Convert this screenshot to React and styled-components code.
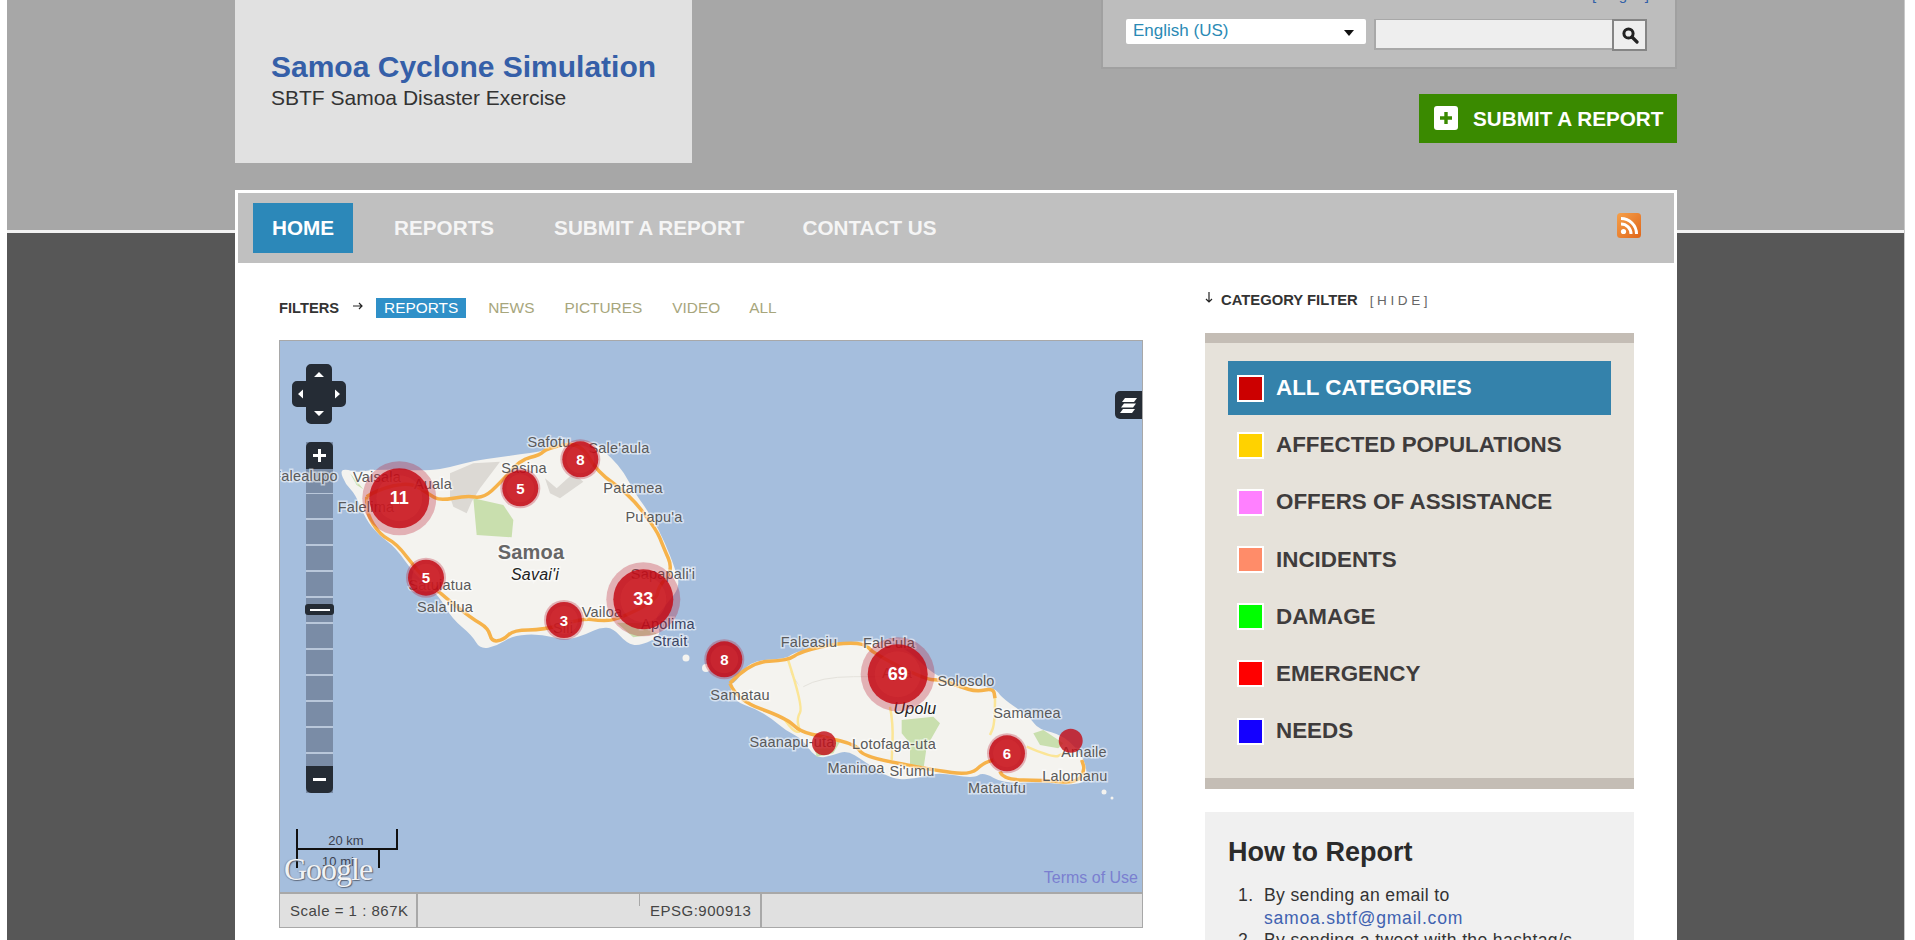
import React from 'react';
import styled, { createGlobalStyle } from 'styled-components';

const GlobalStyle = createGlobalStyle`
    html, body {
        margin: 0;
        padding: 0;
        background: #fff;
        overflow: hidden;
    }
    * {
        box-sizing: border-box;
    }
    body {
        font-family: "Liberation Sans", Arial, sans-serif;
    }
`;

const Frame = styled.div`
    width: 1898px;
    height: 940px;
    margin-left: 7px;
    background: #575757;
    border-right: 1px solid #c8c8c8;
    overflow: hidden;
`;

const Band = styled.div`
    height: 233px;
    background: #a7a7a7;
    border-bottom: 3px solid #f2f2f2;
`;

const Wrap = styled.div`
    width: 1442px;
    margin-left: 228px;
`;

const HeaderRow = styled(Wrap)`
    display: flex;
    justify-content: space-between;
    align-items: flex-start;
`;

const Logo = styled.div`
    width: 457px;
    height: 163px;
    padding: 49px 0 0 36px;
    background: #e1e1e1;
`;

const Title = styled.h1`
    margin: 0;
    font-size: 30px;
    line-height: 36px;
    font-weight: bold;
    color: #355fa8;
`;

const Tagline = styled.p`
    margin: 1px 0 0;
    font-size: 21px;
    line-height: 24px;
    color: #333;
`;

const HeaderRight = styled.div`
    width: 576px;
    display: flex;
    flex-direction: column;
    align-items: flex-end;
`;

const SearchBox = styled.div`
    position: relative;
    width: 576px;
    height: 69px;
    padding: 19px 0 0 23px;
    display: flex;
    align-items: flex-start;
    background: #bdbdbd;
    border: 2px solid #a0a0a0;
    border-top: 0;
`;

const LoginLine = styled.div`
    position: absolute;
    top: -13px;
    right: 24px;
    font-size: 15px;
    line-height: 16px;
    color: #e6dfc8;

    a {
        color: #3160a8;
        letter-spacing: 2px;
    }
`;

const LangSelect = styled.div`
    width: 240px;
    height: 25px;
    margin-right: 8px;
    padding: 0 8px 0 7px;
    display: flex;
    align-items: center;
    justify-content: space-between;
    background: #fff;
    border-radius: 2px;
    font-size: 17px;
    color: #2a8ab5;

    span {
        margin-top: -1px;
    }

    i {
        width: 0;
        height: 0;
        margin: 2px 4px 0 0;
        border-left: 5px solid transparent;
        border-right: 5px solid transparent;
        border-top: 6px solid #111;
    }
`;

const SearchInput = styled.div`
    width: 238px;
    height: 31px;
    background: #eee;
    border: 2px solid #a8a8a8;
    border-top-width: 1px;
    border-right: 0;
`;

const SearchButton = styled.div`
    width: 35px;
    height: 32px;
    display: flex;
    align-items: center;
    justify-content: center;
    background: #eee;
    border: 2px solid #858585;
`;

const SubmitButton = styled.a`
    width: 258px;
    height: 49px;
    margin-top: 25px;
    padding-left: 15px;
    display: flex;
    align-items: center;
    background: #3a8a00;
    color: #fff;
    font-size: 20.7px;
    font-weight: bold;
    white-space: nowrap;
`;

const PlusIcon = styled.span`
    width: 24px;
    height: 24px;
    margin: -2px 15px 0 0;
    display: flex;
    align-items: center;
    justify-content: center;
    background: #fff;
    border-radius: 3px;
`;

const Main = styled(Wrap)`
    margin-top: -43px;
    height: 800px;
    background: #fff;
    border: solid #fff;
    border-width: 3px 3px 0;
`;

const Nav = styled.nav`
    height: 70px;
    padding: 10px 33px 0 15px;
    display: flex;
    align-items: flex-start;
    background: #c0c0c0;
`;

const NavLink = styled.a`
    height: 50px;
    margin-right: ${p => p.$gap}px;
    padding: 0 ${p => (p.$active ? 19 : 0)}px;
    display: flex;
    align-items: center;
    background: ${p => (p.$active ? '#2c88b9' : 'transparent')};
    color: ${p => (p.$active ? '#fff' : '#f5f5f5')};
    font-size: 20.7px;
    font-weight: bold;
    white-space: nowrap;
`;

const RssLink = styled.a`
    margin: 10px 0 0 auto;
    display: block;
    height: 25px;
`;

const Content = styled.div`
    display: flex;
    align-items: flex-start;
`;

const LeftColumn = styled.div`
    width: 967px;
    padding: 35px 0 0 41px;
`;

const Filters = styled.div`
    height: 20px;
    margin-bottom: 22px;
    display: flex;
    align-items: center;
`;

const FilterLabel = styled.span`
    margin-right: 13px;
    font-size: 14.7px;
    font-weight: bold;
    color: #333;
`;

const SmallArrow = styled.svg`
    display: block;
    flex: none;
    margin-top: -5px;
`;

const FilterTab = styled.a`
    height: 20px;
    margin-left: ${p => p.$gap}px;
    padding: 0 ${p => (p.$active ? 8 : 0)}px;
    display: flex;
    align-items: center;
    background: ${p => (p.$active ? '#2f90c8' : 'transparent')};
    color: ${p => (p.$active ? '#fff' : '#a7a67c')};
    font-size: 15.4px;
`;

const MapBox = styled.div`
    width: 864px;
    border: 1px solid #a8a8a8;
`;

const MapCanvas = styled.div`
    position: relative;
    width: 862px;
    height: 551px;
    background: #a5bedd;
    overflow: hidden;
`;

/* sits above the zoom bar: the place names run over it in the reference */
const MapDrawing = styled.svg`
    position: relative;
    display: block;
`;

const PlaceLabel = styled.text`
    font-family: "Liberation Sans", Arial, sans-serif;
    font-size: ${p => p.$size || 14.5}px;
    font-weight: ${p => (p.$bold ? 'bold' : 'normal')};
    font-style: ${p => (p.$italic ? 'italic' : 'normal')};
    fill: ${p => p.$color || '#5a5a5a'};
    text-anchor: middle;
    dominant-baseline: central;
    letter-spacing: 0.2px;
    paint-order: stroke;
    stroke: rgba(255, 255, 255, 0.55);
    stroke-width: 3px;
`;

const ClusterCount = styled.text`
    font-family: "Liberation Sans", Arial, sans-serif;
    font-size: ${p => p.$size}px;
    font-weight: bold;
    fill: #fff;
    text-anchor: middle;
    dominant-baseline: central;
`;

const ScaleText = styled.text`
    font-family: "Liberation Sans", Arial, sans-serif;
    font-size: 13px;
    fill: #3c4250;
    text-anchor: middle;
    dominant-baseline: central;
`;

const PanControl = styled.svg`
    position: absolute;
    left: 12px;
    top: 23px;
`;

const ZoomBar = styled.div`
    position: absolute;
    left: 26px;
    top: 101px;
    width: 27px;
    height: 351px;
    background: repeating-linear-gradient(
        to bottom,
        #7a8ca6 0,
        #7a8ca6 24.5px,
        #b9c7da 24.5px,
        #b9c7da 26px
    );
`;

const ZoomCap = styled.div`
    position: absolute;
    left: 0;
    ${p => (p.$bottom ? 'bottom: 0' : 'top: 0')};
    width: 27px;
    height: 27px;
    display: flex;
    align-items: center;
    justify-content: center;
    background: #252c35;
    border-radius: ${p => (p.$bottom ? '0 0 5px 5px' : '5px 5px 0 0')};
`;

const ZoomHandle = styled.div`
    position: absolute;
    left: -1px;
    top: 162px;
    width: 29px;
    height: 11px;
    display: flex;
    align-items: center;
    justify-content: center;
    background: #252c35;
    border-radius: 3px;

    &::after {
        content: '';
        width: 20px;
        height: 2px;
        background: #fff;
    }
`;

const LayerSwitch = styled.div`
    position: absolute;
    right: 0;
    top: 50px;
    width: 27px;
    height: 28px;
    display: flex;
    align-items: center;
    justify-content: center;
    background: #252c35;
    border-radius: 5px 0 0 5px;
`;

const GoogleMark = styled.div`
    position: absolute;
    left: 4px;
    bottom: 6px;
    font-family: "Liberation Serif", serif;
    font-size: 32px;
    line-height: 34px;
    letter-spacing: -1px;
    color: rgba(255, 255, 255, 0.92);
    text-shadow: 1px 1px 1px #5c6678, -1px 0 1px #8a94a8;
`;

const TermsLink = styled.a`
    position: absolute;
    right: 4px;
    bottom: 5px;
    font-size: 16px;
    line-height: 18px;
    color: #7a7fd0;
`;

const StatusBar = styled.div`
    height: 35px;
    display: flex;
    background: #e0e0e0;
    border-top: 2px solid #a8a8a8;
    font-size: 15px;
    letter-spacing: 0.5px;
    color: #444;
`;

const StatusCell = styled.div`
    position: relative;
    width: ${p => p.$width}px;
    padding-left: ${p => p.$pad}px;
    display: flex;
    align-items: center;
    white-space: nowrap;
    border-right: ${p => (p.$divider ? '2px solid #a8a8a8' : '0')};
`;

const StatusNotch = styled.span`
    position: absolute;
    right: 0;
    top: 0;
    width: 1px;
    height: 12px;
    background: #a8a8a8;
`;

const RightColumn = styled.div`
    width: 429px;
    padding-top: 28px;
`;

const CategoryHead = styled.div`
    height: 18px;
    margin-bottom: 24px;
    display: flex;
    align-items: center;
`;

const CategoryTitle = styled.span`
    margin: 0 12px 0 6px;
    font-size: 14.8px;
    font-weight: bold;
    color: #333;
`;

const HideLink = styled.a`
    font-size: 13.5px;
    letter-spacing: 3.6px;
    color: #666;
`;

const CategoryPanel = styled.div`
    height: 456px;
    padding: 18px 23px 0;
    background: #e6e2da;
    border: solid #c4bdb5;
    border-width: 10px 0 11px;
`;

const CategoryRow = styled.a`
    height: 54px;
    margin-bottom: 3.2px;
    padding-left: 9px;
    display: flex;
    align-items: center;
    background: ${p => (p.$active ? '#3482ab' : 'transparent')};
    color: ${p => (p.$active ? '#fff' : '#3f3c3c')};
    font-size: 22.4px;
    font-weight: bold;
    white-space: nowrap;
`;

const Swatch = styled.span`
    width: 27px;
    height: 27px;
    margin-right: 12px;
    flex: none;
    background: ${p => p.$color};
    border: 2px solid #fff;
`;

const ReportBox = styled.div`
    margin-top: 23px;
    height: 200px;
    padding: 23px;
    background: #f0f0f0;
`;

const ReportTitle = styled.h2`
    margin: 0 0 15px;
    font-size: 27px;
    line-height: 34px;
    font-weight: bold;
    color: #2b2b2b;
`;

const Step = styled.div`
    display: flex;
    font-size: 17.6px;
    line-height: 22.6px;
    letter-spacing: 0.35px;
    color: #333;
`;

const StepNumber = styled.span`
    width: 36px;
    padding-left: 10px;
    flex: none;
`;

const StepLink = styled.a`
    display: block;
    letter-spacing: 0.75px;
    color: #3f62b0;
`;

const toSavaii = pts => pts.map(([x, y]) => [340 + x / 3, 430 + y / 3]);
const toUpolu = pts => pts.map(([x, y]) => [700 + x / 3, 620 + y / 3]);
const flat = pts => pts.map(p => p.join(',')).join(' ');

// rounds off the traced corners, curve runs through the midpoints
const smooth = (pts, closed) => {
    const mid = (a, b) => [(a[0] + b[0]) / 2, (a[1] + b[1]) / 2];
    const fmt = p => `${p[0].toFixed(1)} ${p[1].toFixed(1)}`;
    if (closed) {
        let d = `M${fmt(mid(pts[pts.length - 1], pts[0]))}`;
        pts.forEach((p, i) => {
            d += `Q${fmt(p)} ${fmt(mid(p, pts[(i + 1) % pts.length]))}`;
        });
        return d + 'Z';
    }
    let d = `M${fmt(pts[0])}`;
    for (let i = 1; i < pts.length - 1; i++) {
        d += `Q${fmt(pts[i])} ${fmt(mid(pts[i], pts[i + 1]))}`;
    }
    return d + `L${fmt(pts[pts.length - 1])}`;
};

const LAND = '#f4f3ef';
const GREEN = '#c9dfae';
const GREY = '#dcd9d4';
const ROAD = '#f6b24a';
const MINOR = '#fbe596';

const savaii = {
    land: [[0,122],[20,118],[50,128],[100,118],[270,122],[330,112],[400,92],[480,82],[540,72],[600,66],[640,47],[720,30],[768,42],[813,82],[853,128],[884,188],[934,258],[975,338],[1006,418],[1020,470],[982,520],[940,570],[968,615],[900,648],[860,640],[820,594],[780,592],[740,612],[680,632],[600,612],[520,616],[470,648],[420,658],[396,616],[336,566],[296,496],[226,436],[166,351],[116,316],[76,266],[46,192],[16,162]],
    green: [[[400,205],[490,225],[520,270],[515,322],[410,315]], [[30,130],[70,178],[50,165]], [[830,578],[880,622],[950,612],[910,580]]],
    grey: [[[330,130],[400,100],[480,95],[420,175],[395,215],[380,250],[340,230],[330,200]], [[615,145],[650,175],[700,130],[730,155],[660,205],[630,190]]],
    road: [[80,200],[110,180],[210,155],[270,195],[300,212],[380,197],[430,205],[480,160],[540,90],[600,75],[620,55],[720,35],[770,125],[870,195],[950,300],[970,350],[1000,420],[955,470],[950,510],[830,570],[780,572],[730,565],[610,600],[520,600],[490,630],[455,635],[445,595],[395,565],[300,490],[230,420],[170,340],[120,315],[80,250],[80,200]],
};

const upolu = {
    land: [[106,190],[148,122],[260,116],[280,97],[400,72],[490,62],[560,67],[622,87],[702,167],[782,192],[884,202],[904,232],[954,267],[994,297],[1014,327],[1094,347],[1156,418],[1162,484],[1112,496],[1030,486],[910,491],[850,456],[820,476],[710,456],[640,479],[570,476],[488,421],[440,391],[400,406],[348,416],[306,356],[256,331],[216,296],[166,266],[106,246],[86,190]],
    green: [[[605,300],[700,290],[720,310],[680,380],[670,450],[630,440],[630,370],[605,340]], [[1000,340],[1030,330],[1090,370],[1075,385],[1020,375]], [[340,370],[420,365],[400,400],[350,410]]],
    grey: [[[268,150],[300,200],[280,175]]],
    majorRoads: [
        [[90,190],[150,125],[265,122],[300,95],[410,70],[495,70],[520,100],[680,180],[720,178],[780,200],[830,215],[880,205],[885,235]],
        [[90,190],[110,240],[260,295],[300,335],[370,350],[470,375],[490,410],[700,450],[810,465],[850,430],[880,420]],
        [[900,455],[910,480],[1030,480],[1130,490],[1155,450],[1145,420]],
    ],
    minorRoads: [
        [[265,122],[310,260],[290,295],[300,335]],
        [[255,300],[280,335],[300,335]],
        [[570,260],[580,310],[575,420]],
        [[885,235],[885,310],[870,345]],
        [[980,380],[1060,415],[1090,400]],
    ],
    tracks: [[[310,200],[360,170],[560,170]]],
};

const places = [
    { name: 'Falealupo', x: 305, y: 476 },
    { name: 'Vaisala', x: 377, y: 477 },
    { name: 'Auala', x: 433, y: 484 },
    { name: 'Falelima', x: 366, y: 507 },
    { name: 'Safotu', x: 549, y: 442 },
    { name: "Sale'aula", x: 619, y: 448 },
    { name: 'Sasina', x: 524, y: 468 },
    { name: 'Patamea', x: 633, y: 488 },
    { name: "Pu'apu'a", x: 654, y: 517 },
    { name: 'Samoa', x: 531, y: 552, size: 20, bold: true, color: '#666' },
    { name: "Savai'i", x: 535, y: 574, size: 16, italic: true, color: '#222' },
    { name: 'Satuiatua', x: 440, y: 585 },
    { name: "Sala'ilua", x: 445, y: 607 },
    { name: "Sapapali'i", x: 663, y: 574 },
    { name: 'Vailoa', x: 602, y: 612 },
    { name: 'Sili', x: 563, y: 628 },
    { name: 'Apolima', x: 668, y: 624, color: '#3a4462' },
    { name: 'Strait', x: 670, y: 641, color: '#3a4462' },
    { name: 'Samatau', x: 740, y: 695 },
    { name: 'Faleasiu', x: 809, y: 642 },
    { name: "Fale'ula", x: 889, y: 643 },
    { name: 'Apia', x: 897, y: 673 },
    { name: 'Solosolo', x: 966, y: 681 },
    { name: 'Upolu', x: 915, y: 708, size: 16, italic: true, color: '#222' },
    { name: 'Samamea', x: 1027, y: 713 },
    { name: 'Saanapu-uta', x: 792, y: 742 },
    { name: 'Lotofaga-uta', x: 894, y: 744 },
    { name: 'Amaile', x: 1084, y: 752 },
    { name: 'Lalomanu', x: 1075, y: 776 },
    { name: 'Maninoa', x: 856, y: 768 },
    { name: "Si'umu", x: 912, y: 771 },
    { name: 'Matatufu', x: 997, y: 788 },
];

const clusters = [
    { count: 11, x: 399.3, y: 498.3, big: true },
    { count: 5, x: 520.3, y: 488.3 },
    { count: 8, x: 580.3, y: 459.3 },
    { count: 5, x: 426, y: 577.7 },
    { count: 33, x: 643.3, y: 599.3, big: true },
    { count: 3, x: 564, y: 620 },
    { count: 8, x: 724.3, y: 659.3 },
    { count: 69, x: 897.7, y: 674.3, big: true },
    { count: 6, x: 1007, y: 753.3 },
];

const singles = [
    { x: 824, y: 743.3 },
    { x: 1070.7, y: 740.7 },
];

const categories = [
    { name: 'ALL CATEGORIES', color: '#cc0000', active: true },
    { name: 'AFFECTED POPULATIONS', color: '#ffd200' },
    { name: 'OFFERS OF ASSISTANCE', color: '#ff80ff' },
    { name: 'INCIDENTS', color: '#ff8c69' },
    { name: 'DAMAGE', color: '#00ff00' },
    { name: 'EMERGENCY', color: '#ff0000' },
    { name: 'NEEDS', color: '#1400ff' },
];

const Cluster = ({ x, y, big, count }) => (
    <g>
        <circle cx={x} cy={y} r={big ? 37 : 20} fill="rgba(185, 25, 45, 0.3)" />
        <circle cx={x} cy={y} r={big ? 30 : 18} fill="rgba(195, 10, 20, 0.84)" />
        <circle cx={x} cy={y} r={big ? 23 : 14} fill="rgba(225, 60, 60, 0.25)" />
        <ClusterCount x={x} y={y} $size={big ? 18 : 15}>{count}</ClusterCount>
    </g>
);

const SamoaMap = () => (
    <MapDrawing width="862" height="551" viewBox="280 341 862 551">
        <path d={smooth(toSavaii(savaii.land), true)} fill={LAND} />
        {savaii.grey.map((p, i) => <polygon key={i} points={flat(toSavaii(p))} fill={GREY} />)}
        {savaii.green.map((p, i) => <polygon key={i} points={flat(toSavaii(p))} fill={GREEN} />)}
        <path d={smooth(toSavaii(savaii.road), false)} fill="none" stroke={ROAD} strokeWidth="3.5" />

        <path d={smooth(toUpolu(upolu.land), true)} fill={LAND} />
        {upolu.grey.map((p, i) => <polygon key={i} points={flat(toUpolu(p))} fill={GREY} />)}
        {upolu.green.map((p, i) => <polygon key={i} points={flat(toUpolu(p))} fill={GREEN} />)}
        {upolu.tracks.map((p, i) => <path key={i} d={smooth(toUpolu(p), false)} fill="none" stroke="#e4e2dc" strokeWidth="1" />)}
        {upolu.minorRoads.map((p, i) => <path key={i} d={smooth(toUpolu(p), false)} fill="none" stroke={MINOR} strokeWidth="2.5" />)}
        {upolu.majorRoads.map((p, i) => <path key={i} d={smooth(toUpolu(p), false)} fill="none" stroke={ROAD} strokeWidth="3.5" />)}

        {/* reef specks off the coast */}
        <circle cx="686" cy="658" r="3.5" fill={LAND} />
        <circle cx="706" cy="668" r="4" fill={LAND} />
        <circle cx="1104" cy="792" r="2.5" fill={LAND} />
        <circle cx="1112" cy="798" r="1.5" fill={LAND} />
        <circle cx="767" cy="738" r="1.5" fill={LAND} />

        {places.map(p => (
            <PlaceLabel key={p.name} x={p.x} y={p.y} $size={p.size} $bold={p.bold} $italic={p.italic} $color={p.color}>
                {p.name}
            </PlaceLabel>
        ))}

        {singles.map((p, i) => <circle key={i} cx={p.x} cy={p.y} r="12" fill="rgba(195, 15, 25, 0.82)" />)}
        {clusters.map((c, i) => <Cluster key={i} {...c} />)}

        {/* scale line */}
        <g stroke="#111" strokeWidth="2" fill="none">
            <path d="M297 829V868M296 849H398M397 829V849M379 849V868" />
        </g>
        <ScaleText x="346" y="840">20 km</ScaleText>
        <ScaleText x="338" y="861">10 mi</ScaleText>
    </MapDrawing>
);

const PanArrows = () => (
    <PanControl width="54" height="60" viewBox="0 0 54 60">
        <path d="M14 5a5 5 0 0 1 5-5h16a5 5 0 0 1 5 5v12h9a5 5 0 0 1 5 5v16a5 5 0 0 1-5 5h-9v12a5 5 0 0 1-5 5H19a5 5 0 0 1-5-5V43H5a5 5 0 0 1-5-5V22a5 5 0 0 1 5-5h9z" fill="#252c35" />
        <path d="M27 8l5 5H22zM27 52l-5-5h10zM6 30l5-4.5v9zM48 30l-5-4.5v9z" fill="#fff" />
    </PanControl>
);

const App = () => (
    <>
        <GlobalStyle />
        <Frame>
            <Band>
                <HeaderRow>
                    <Logo>
                        <Title>Samoa Cyclone Simulation</Title>
                        <Tagline>SBTF Samoa Disaster Exercise</Tagline>
                    </Logo>
                    <HeaderRight>
                        <SearchBox>
                            <LoginLine>Welcome Guest <a>[Login]</a></LoginLine>
                            <LangSelect>
                                <span>English (US)</span>
                                <i />
                            </LangSelect>
                            <SearchInput />
                            <SearchButton>
                                <svg width="18" height="18" viewBox="0 0 18 18">
                                    <circle cx="7.5" cy="7.5" r="4.6" fill="none" stroke="#222" strokeWidth="3" />
                                    <path d="M11 11l5 5" stroke="#222" strokeWidth="3.2" strokeLinecap="round" />
                                </svg>
                            </SearchButton>
                        </SearchBox>
                        <SubmitButton>
                            <PlusIcon>
                                <svg width="14" height="14" viewBox="0 0 14 14">
                                    <path d="M7 1v12M1 7h12" stroke="#3a8a00" strokeWidth="3.4" />
                                </svg>
                            </PlusIcon>
                            SUBMIT A REPORT
                        </SubmitButton>
                    </HeaderRight>
                </HeaderRow>
            </Band>
            <Main>
                <Nav>
                    <NavLink $active $gap={41}>HOME</NavLink>
                    <NavLink $gap={60}>REPORTS</NavLink>
                    <NavLink $gap={58}>SUBMIT A REPORT</NavLink>
                    <NavLink $gap={0}>CONTACT US</NavLink>
                    <RssLink>
                        <svg width="24" height="25" viewBox="0 0 24 25">
                            <defs>
                                <linearGradient id="rssFill" x1="0" y1="0" x2="1" y2="1">
                                    <stop offset="0" stopColor="#f5a04a" />
                                    <stop offset="1" stopColor="#e0661a" />
                                </linearGradient>
                            </defs>
                            <rect width="24" height="25" rx="3.5" fill="url(#rssFill)" />
                            <circle cx="6.5" cy="18.5" r="2.6" fill="#fff" />
                            <path d="M4 11a10 10 0 0 1 10 10M4 5.5A15.5 15.5 0 0 1 19.5 21" fill="none" stroke="#fff" strokeWidth="3" />
                        </svg>
                    </RssLink>
                </Nav>
                <Content>
                    <LeftColumn>
                        <Filters>
                            <FilterLabel>FILTERS</FilterLabel>
                            <SmallArrow width="12" height="10" viewBox="0 0 12 10">
                                <path d="M1 5h9M7 2l3 3-3 3" fill="none" stroke="#222" strokeWidth="1.2" />
                            </SmallArrow>
                            <FilterTab $active $gap={12}>REPORTS</FilterTab>
                            <FilterTab $gap={22}>NEWS</FilterTab>
                            <FilterTab $gap={30}>PICTURES</FilterTab>
                            <FilterTab $gap={30}>VIDEO</FilterTab>
                            <FilterTab $gap={29}>ALL</FilterTab>
                        </Filters>
                        <MapBox>
                            <MapCanvas>
                                <ZoomBar>
                                    <ZoomCap>
                                        <svg width="13" height="13" viewBox="0 0 13 13">
                                            <path d="M6.5 0v13M0 6.5h13" stroke="#fff" strokeWidth="3" />
                                        </svg>
                                    </ZoomCap>
                                    <ZoomHandle />
                                    <ZoomCap $bottom>
                                        <svg width="13" height="13" viewBox="0 0 13 13">
                                            <path d="M0 6.5h13" stroke="#fff" strokeWidth="3" />
                                        </svg>
                                    </ZoomCap>
                                </ZoomBar>
                                <SamoaMap />
                                <PanArrows />
                                <LayerSwitch>
                                    <svg width="18" height="18" viewBox="0 0 18 18">
                                        <path d="M5 2h12l-3 4H2zM4 7.5h12l-3 4H1zM3 13h12l-3 4H0z" fill="#fff" />
                                    </svg>
                                </LayerSwitch>
                                <GoogleMark>Google</GoogleMark>
                                <TermsLink>Terms of Use</TermsLink>
                            </MapCanvas>
                            <StatusBar>
                                <StatusCell $width={138} $pad={10} $divider>Scale = 1 : 867K</StatusCell>
                                <StatusCell $width={222} $pad={0}><StatusNotch /></StatusCell>
                                <StatusCell $width={122} $pad={10} $divider>EPSG:900913</StatusCell>
                                <StatusCell $width={380} $pad={0} />
                            </StatusBar>
                        </MapBox>
                    </LeftColumn>
                    <RightColumn>
                        <CategoryHead>
                            <SmallArrow width="10" height="12" viewBox="0 0 10 12">
                                <path d="M4 0v10M1 7l3 3 3-3" fill="none" stroke="#222" strokeWidth="1.2" />
                            </SmallArrow>
                            <CategoryTitle>CATEGORY FILTER</CategoryTitle>
                            <HideLink>[HIDE]</HideLink>
                        </CategoryHead>
                        <CategoryPanel>
                            {categories.map(c => (
                                <CategoryRow key={c.name} $active={c.active}>
                                    <Swatch $color={c.color} />
                                    {c.name}
                                </CategoryRow>
                            ))}
                        </CategoryPanel>
                        <ReportBox>
                            <ReportTitle>How to Report</ReportTitle>
                            <Step>
                                <StepNumber>1.</StepNumber>
                                <div>
                                    By sending an email to
                                    <StepLink>samoa.sbtf@gmail.com</StepLink>
                                </div>
                            </Step>
                            <Step>
                                <StepNumber>2.</StepNumber>
                                <div>By sending a tweet with the hashtag/s</div>
                            </Step>
                        </ReportBox>
                    </RightColumn>
                </Content>
            </Main>
        </Frame>
    </>
);

export default App;
